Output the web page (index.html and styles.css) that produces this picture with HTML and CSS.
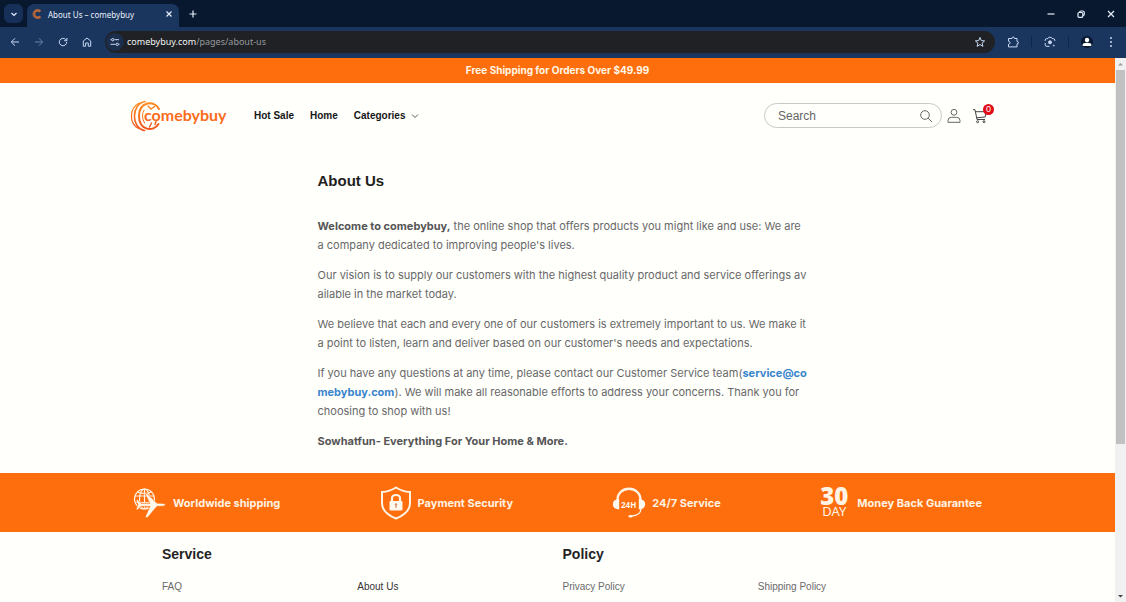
FILE: index.html
```html
<!DOCTYPE html>
<html lang="en">
<head>
<meta charset="utf-8">
<title>About Us – comebybuy</title>
<link rel="stylesheet" href="styles.css">
</head>
<body>
<div class="browser">
  <div class="tabstrip">
    <button class="tab-search" aria-label="Search tabs"><svg width="10" height="10" viewBox="0 0 10 10"><path d="M2.500 4 5 6.500 7.500 4" /></svg></button>
    <div class="tab">
      <svg class="favicon" width="10" height="10" viewBox="0 0 10 10"><path d="M8.300 2.600A3.600 3.600 0 1 0 8.300 7.400" stroke="#b5673c" stroke-width="2.600"/><path d="M3 1.500A4 4 0 0 0 3 8.500" stroke="#8a5a48" stroke-width="1"/></svg>
      <span class="tab-title">About Us – comebybuy</span>
      <button class="tab-close" aria-label="Close tab"><svg width="8" height="8" viewBox="0 0 8 8"><path d="M1.500 1.500l5 5M6.500 1.500l-5 5"/></svg></button>
    </div>
    <button class="new-tab" aria-label="New tab"><svg width="10" height="10" viewBox="0 0 10 10"><path d="M5 1.500v7M1.500 5h7"/></svg></button>
    <div class="window-controls">
      <button aria-label="Minimize"><svg width="10" height="10" viewBox="0 0 10 10"><path d="M1.500 5h7"/></svg></button>
      <button aria-label="Restore"><svg width="10" height="10" viewBox="0 0 10 10"><rect x="2" y="3.500" width="4.800" height="4.800" rx="1"/><path d="M3.500 3.200Q3.700 2 5 2h1.500Q8.300 2 8.300 3.800V5Q8.300 6.400 7 6.600"/></svg></button>
      <button aria-label="Close"><svg width="10" height="10" viewBox="0 0 10 10"><path d="M2 2l6 6M8 2l-6 6"/></svg></button>
    </div>
  </div>
  <div class="toolbar">
    <button aria-label="Back"><svg width="12" height="12" viewBox="0 0 12 12"><path d="M10 6H2.500M6 2.300 2.300 6 6 9.700"/></svg></button>
    <button class="dim" aria-label="Forward"><svg width="12" height="12" viewBox="0 0 12 12"><path d="M2 6h7.500M6 2.300 9.700 6 6 9.700"/></svg></button>
    <button aria-label="Reload"><svg width="12" height="12" viewBox="0 0 12 12"><path d="M9.700 6A3.700 3.700 0 1 1 8.600 3.400L9.700 4.500M9.900 2v2.700H7.200"/></svg></button>
    <button aria-label="Home"><svg width="12" height="12" viewBox="0 0 12 12"><path d="M2.300 5 6 2l3.700 3v5.200H7.300V7H4.700v3.200H2.300z"/></svg></button>
    <div class="address">
      <button class="site-info" aria-label="Site information"><svg width="12" height="12" viewBox="0 0 12 12"><path d="M1.500 3.700h1M5.500 3.700h4.500M1.500 8.300h5M9.500 8.300h1"/><circle cx="3.800" cy="3.700" r="1.200"/><circle cx="8.200" cy="8.300" r="1.200"/></svg></button>
      <span class="url"><b>comebybuy.com</b>/pages/about-us</span>
      <button class="star" aria-label="Bookmark"><svg width="12" height="12" viewBox="0 0 12 12"><path d="M6 1.500 7.300 4.600l3.300.3-2.500 2.200.8 3.300L6 8.600l-2.900 1.800.8-3.300L1.400 4.900l3.300-.3z"/></svg></button>
    </div>
    <div class="toolbar-actions">
      <button aria-label="Extensions"><svg width="12" height="12" viewBox="0 0 12 12"><path d="M1.500 2.500H5Q5 1 6.200 1T7.400 2.500H10v3Q11.500 5.500 11.500 6.700T10 7.900v3H1.500V8.200Q3 8 3 6.700T1.500 5.200z"/></svg></button>
      <span class="divider"></span>
      <button aria-label="Search with Lens"><svg width="12" height="12" viewBox="0 0 12 12"><path d="M1.200 5V4.200Q1.200 2.600 2.800 2.600h1L4.800 1.300h2.400l1 1.300h1q1.600 0 1.600 1.600V5M1.200 7v1.700q0 1.600 1.600 1.600h2.700"/><circle cx="6" cy="6.300" r="1.500" fill="#c9daf5"/><circle cx="9.800" cy="9.600" r=".5"/></svg></button>
      <span class="divider"></span>
      <button class="profile" aria-label="Profile"><svg width="12" height="12" viewBox="0 0 12 12"><circle cx="6" cy="4" r="2.200" fill="#fff" stroke="none"/><path d="M1.700 10V8.700Q1.700 6.800 6 6.800t4.300 1.900V10z" fill="#fff" stroke="none"/></svg></button>
      <button aria-label="Menu"><svg width="12" height="12" viewBox="0 0 12 12"><g fill="#c9daf5" stroke="none"><circle cx="6" cy="2" r="1"/><circle cx="6" cy="6" r="1"/><circle cx="6" cy="10" r="1"/></g></svg></button>
    </div>
  </div>

  <div class="viewport">
    <div class="page">
      <div class="announcement">Free Shipping for Orders Over $49.99</div>
      <header class="header">
        <a class="logo" href="#" aria-label="comebybuy">
          <svg width="98" height="32" viewBox="0 0 98 32" fill="none">
            <defs><linearGradient id="ring" x1="0" y1="0" x2="0" y2="1"><stop offset="0" stop-color="#ff8a20"/><stop offset="1" stop-color="#f0561c"/></linearGradient></defs>
            <g stroke="url(#ring)" stroke-linecap="round">
              <path d="M9 3C-1 9-1 23 8.500 28.500" stroke-width="1.200"/>
              <path d="M15 1.500C1 4 1 28 14.500 30.500" stroke-width="1.600"/>
              <path d="M29 9C24.500-.500 9 1.500 9 16s14.500 16.500 19.500 8" stroke-width="2"/>
              <path d="M14 10Q12.500 12.500 12.500 16t2 7" stroke-width="1"/>
              <path d="M18 6l3 3 3.500-2.500M19.500 27l2-4M25 24.500l1-3" stroke-width="1.400"/>
            </g>
            <text class="wordmark" x="14" y="21">comebybuy</text>
          </svg>
        </a>
        <nav class="nav">
          <a href="#">Hot Sale</a>
          <a href="#">Home</a>
          <a href="#">Categories <svg width="8" height="6" viewBox="0 0 8 6"><path d="M1 1.500 4 4.500 7 1.500" fill="none" stroke="#444" stroke-width=".9"/></svg></a>
        </nav>
        <form class="search">
          <input type="search" aria-label="Search" placeholder="Search">
          <button type="button" aria-label="Submit search"><svg width="14" height="14" viewBox="0 0 14 14"><circle cx="6" cy="6" r="4.300"/><path d="M9.200 9.200 13 13"/></svg></button>
        </form>
        <a class="account" href="#" aria-label="Log in"><svg width="14" height="16" viewBox="0 0 14 16"><circle cx="7" cy="4.300" r="2.900"/><path d="M1 14.300V12.500Q1 9.300 4.500 9.300h5Q13 9.300 13 12.500v1.800z"/></svg></a>
        <a class="cart" href="#" aria-label="Cart"><svg width="16" height="16" viewBox="0 0 16 16"><path d="M1 1.700h2l2 9.800h8M3.500 3.700h10.700l-1 5.300-8.600.8"/><circle cx="5.600" cy="13.700" r="1"/><circle cx="12" cy="13.700" r="1"/></svg><span class="cart-count">0</span></a>
      </header>

      <main class="article">
        <h1>About Us</h1>
        <p><strong>Welcome to comebybuy,</strong> the online shop that offers products you might like and use: We are<br>a company dedicated to improving people's lives.</p>
        <p>Our vision is to supply our customers with the highest quality product and service offerings av<br>ailable in the market today.</p>
        <p>We believe that each and every one of our customers is extremely important to us. We make it<br>a point to listen, learn and deliver based on our customer's needs and expectations.</p>
        <p>If you have any questions at any time, please contact our Customer Service team(<a href="#">service@co<br>mebybuy.com</a>). We will make all reasonable efforts to address your concerns. Thank you for<br>choosing to shop with us!</p>
        <p><strong>Sowhatfun- Everything For Your Home &amp; More.</strong></p>
      </main>

      <section class="features">
        <div class="feature">
          <svg width="34" height="32" viewBox="0 0 34 32" fill="none" stroke="#fff3e4" stroke-width="1.200">
            <circle cx="11.500" cy="12" r="10"/><ellipse cx="11.500" cy="12" rx="5" ry="10"/><path d="M11.500 2v19M2 9h19M2 15.500h19M4.500 5q7 3 14 0"/>
            <path d="M33 17.800q-1.500-1.500-5-1.500h-4L14 6.500l-2 .5 5 9.300H8L4.500 12.500 3 13l2 4.800-2 4.700 1.500.5L8 19.300h9L12 30.500h2.500l9.500-11.200h4q3.500 0 5-1.500z" fill="#fff8ee" stroke="#ff6e0c" stroke-width=".6"/>
          </svg>
          <span>Worldwide shipping</span>
        </div>
        <div class="feature">
          <svg width="32" height="34" viewBox="0 0 32 34" fill="none" stroke="#fff3e4" stroke-width="2">
            <path d="M16 1.500Q22 5.500 30 6v11q0 10-14 15.500Q2 27 2 17V6Q10 5.500 16 1.500z"/><path d="M12 16v-3.500q0-3.500 4-3.500t4 3.500V16" stroke-width="2.200"/><rect x="9.500" y="15" width="13" height="9.500" rx="1" fill="#fff8ee" stroke="none"/><path d="M16 18v4" stroke="#d9936a" stroke-width="1.200"/><circle cx="16" cy="18.500" r="1.200" fill="#d9936a" stroke="none"/>
          </svg>
          <span>Payment Security</span>
        </div>
        <div class="feature">
          <svg width="34" height="32" viewBox="0 0 34 32" fill="none" stroke="#fff3e4">
            <path d="M5.500 13C5.500-2 28.500-2 28.500 13" stroke-width="2.400"/><path d="M29 22q-.5 6.500-9.500 7" stroke-width="1.300"/><ellipse cx="18.500" cy="29.200" rx="2.200" ry="1.300" fill="#fff8ee" stroke="none"/>
            <path d="M7.200 12v10.500Q.8 22 .8 17.200T7.200 12zM26.800 12v10.500q6.400-.5 6.400-5.300T26.800 12z" fill="#fff8ee" stroke="none"/>
            <text class="icon-24" x="9" y="21">24H</text>
          </svg>
          <span>24/7 Service</span>
        </div>
        <div class="feature">
          <div class="thirty-day"><b>30</b><span>DAY</span></div>
          <span>Money Back Guarantee</span>
        </div>
      </section>

      <footer class="footer">
        <section>
          <h2>Service</h2>
          <div class="links"><a href="#">FAQ</a><a class="current" href="#">About Us</a></div>
        </section>
        <section>
          <h2>Policy</h2>
          <div class="links"><a href="#">Privacy Policy</a><a href="#">Shipping Policy</a></div>
        </section>
      </footer>
    </div>
    <div class="scrollbar">
      <svg width="11" height="12" viewBox="0 0 11 12"><path d="M3 7.500 5.500 5 8 7.500z" fill="#9a9a9a"/></svg>
      <div class="track"><div class="thumb"></div></div>
      <svg width="11" height="12" viewBox="0 0 11 12"><path d="M3 5 5.500 7.500 8 5z" fill="#444"/></svg>
    </div>
  </div>
</div>
</body>
</html>
```
FILE: styles.css
```css
* { box-sizing: border-box; }
body { margin: 0; font-family: "Liberation Sans", Arial, sans-serif; }
button { display: flex; align-items: center; justify-content: center; padding: 0; border: 0; background: none; }
a { color: inherit; text-decoration: none; }
.browser { display: flex; flex-direction: column; height: 100vh; overflow: hidden; }

.tabstrip { display: flex; align-items: center; height: 27px; flex: none; padding: 0 4px; background: #07182f; font-family: "Noto Sans", sans-serif; }
.tabstrip svg, .toolbar svg { fill: none; stroke: #e6eefb; stroke-width: 1.2; }
.tab-search { width: 19px; height: 19px; border-radius: 6px; background: #17305a; }
.tab { display: flex; align-items: center; align-self: flex-end; width: 152px; height: 23px; margin-left: 4px; padding: 0 6px 3px 5px; border-radius: 7px 7px 0 0; background: #1a355e; }
.tab-title { flex: 1; margin-left: 6px; font-size: 8px; color: #e9f0fb; white-space: nowrap; }
.new-tab { width: 18px; height: 18px; margin-left: 5px; }
.window-controls { display: flex; gap: 20px; margin-left: auto; padding-right: 6px; }

.toolbar { display: flex; align-items: center; gap: 12px; height: 31px; flex: none; padding: 0 9px 2px; background: #1a355e; font-family: "Noto Sans", sans-serif; }
.toolbar svg { stroke: #c9daf5; stroke-width: 1; }
.toolbar .dim { opacity: .45; }
.address { display: flex; align-items: center; flex: 1; height: 22px; padding: 0 9px 0 1px; border-radius: 11px; background: #202124; }
.site-info { width: 18px; height: 18px; border-radius: 9px; background: #1b2e4d; }
.url { flex: 1; margin-left: 3px; font-size: 9px; color: #969a9f; }
.url b { font-weight: 400; color: #f1f3f4; }
.toolbar-actions { display: flex; align-items: center; gap: 12px; }
.divider { width: 1px; height: 11px; background: #10254a; }
.profile { border-radius: 7px; background: #07182f; }

.viewport { display: flex; flex: 1; min-height: 0; }
.page { flex: 1; min-width: 0; overflow: hidden; background: #fffffc; }
.scrollbar { display: flex; flex-direction: column; width: 11px; background: #f1f1f1; }
.track { flex: 1; }
.thumb { height: 72%; margin: 0 1px; background: #c1c1c1; }

.announcement { padding: 6px; background: #ff6e0c; color: #fff8e8; font: 700 10px/13px Inter, sans-serif; text-align: center; }

.header { display: flex; align-items: center; height: 65px; padding: 0 127px 0 130px; }
.logo svg { display: block; }
.wordmark { font: 700 16px Lato, sans-serif; fill: #fa6c1c; }
.nav { display: flex; gap: 16px; margin-left: 26px; font-size: 10px; font-weight: 700; line-height: 16px; color: #161616; }
.nav svg { margin-left: 3px; }
.search { display: flex; align-items: center; width: 178px; height: 25px; margin-left: auto; padding: 0 8px 0 13px; border: 1px solid #c8c8c4; border-radius: 13px; }
.search input { flex: 1; min-width: 0; padding: 0; border: 0; outline: 0; background: none; font: 12px "Liberation Sans", Arial, sans-serif; color: #666; }
.search input::placeholder { color: #666; opacity: 1; }
.search svg, .account svg, .cart svg { display: block; fill: none; stroke: #666; stroke-width: 1; }
.account { margin-left: 5px; }
.cart { position: relative; margin-left: 11px; }
.cart svg { stroke: #444; }
.cart-count { position: absolute; top: -4px; right: -6px; width: 11px; height: 11px; border-radius: 50%; background: #e00c18; color: #fff; font-size: 9px; line-height: 11px; text-align: center; }

.article { max-width: 480px; margin: 0 auto; padding: 24px 0 22px; color: #686868; font: 11px/19px Inter, sans-serif; white-space: nowrap; }
.article h1 { margin: 0 0 27px; color: #1f1f1f; font: 700 15px/18px "Liberation Sans", Arial, sans-serif; }
.article p { margin: 0 0 11px; }
.article p:last-child { margin: 0; }
.article strong { color: #555; }
.article a { color: #3a85cc; font-weight: 700; }

.features { display: flex; align-items: center; justify-content: space-between; height: 59px; padding: 0 133px; background: #ff6e0c; color: #fff3e4; font: 700 11px Inter, sans-serif; }
.feature { display: flex; align-items: center; gap: 6px; }
.icon-24 { font: 700 8px "Open Sans", sans-serif; fill: #fff8ee; stroke: none; }
.thirty-day { display: flex; flex-direction: column; align-items: center; margin-right: 3px; font-family: "Noto Sans", sans-serif; }
.thirty-day b { font-size: 24px; line-height: 18px; }
.thirty-day span { font-size: 13px; font-weight: 400; line-height: 13px; }

.footer { display: grid; grid-template-columns: 1fr 1fr; gap: 10px; padding: 13px 162px; color: #6a6a6a; font-size: 10px; line-height: 14px; }
.footer h2 { margin: 0 0 17px; color: #242424; font-size: 14px; line-height: 18px; }
.links { display: grid; grid-template-columns: 1fr 1fr; align-items: baseline; }
.links .current { color: #333; }
```
